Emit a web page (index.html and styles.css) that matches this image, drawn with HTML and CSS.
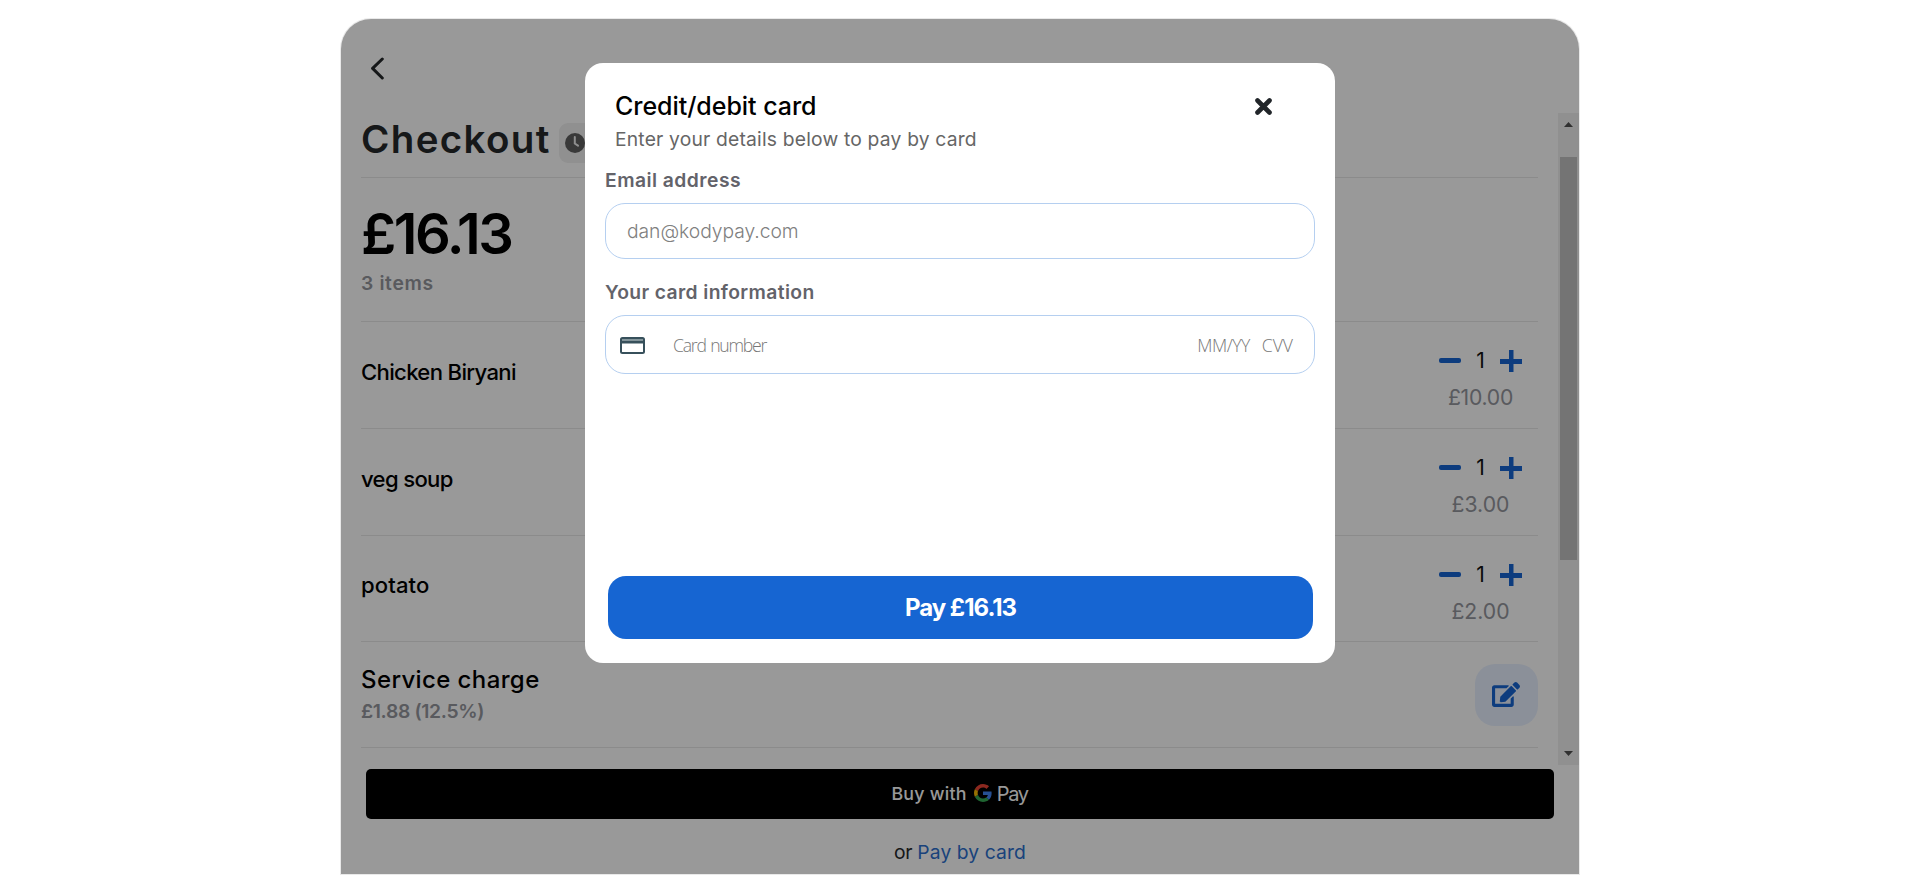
FILE: index.html
```html
<!DOCTYPE html>
<html lang="en">
<head>
<meta charset="utf-8">
<title>Checkout</title>
<link rel="stylesheet" href="styles.css">
</head>
<body>
<main class="panel">
  <header class="topbar">
    <svg class="back" width="15" height="23" viewBox="0 0 15 23"><path d="M12.3 2 2.6 11.4 12.3 21" fill="none" stroke="#25282b" stroke-width="3" stroke-linecap="round" stroke-linejoin="round"/></svg>
  </header>
  <div class="scroller">
    <div class="list">
      <div class="title-row">
        <h1 class="title">Checkout</h1>
        <div class="badge"><svg width="20" height="20" viewBox="0 0 20 20"><circle cx="10" cy="10" r="10" fill="#606060"/><path d="M9.800 4V10.500L13 12.600" fill="none" stroke="#eee" stroke-width="2" stroke-linecap="round"/></svg></div>
      </div>
      <div class="summary">
        <div class="total">£16.13</div>
        <div class="count">3 items</div>
      </div>
      <div class="item">
        <div class="name">Chicken Biryani</div>
        <div class="side">
          <div class="qty"><span class="bar"></span><span>1</span><span class="plus"></span></div>
          <div class="price long">£10.00</div>
        </div>
      </div>
      <div class="item">
        <div class="name">veg soup</div>
        <div class="side">
          <div class="qty"><span class="bar"></span><span>1</span><span class="plus"></span></div>
          <div class="price">£3.00</div>
        </div>
      </div>
      <div class="item short">
        <div class="name potato">potato</div>
        <div class="side">
          <div class="qty"><span class="bar"></span><span>1</span><span class="plus"></span></div>
          <div class="price">£2.00</div>
        </div>
      </div>
      <div class="service">
        <div>
          <div class="service-name">Service charge</div>
          <div class="service-fee">£1.88 (12.5%)</div>
        </div>
        <div class="edit"><svg width="28" height="25" viewBox="0 0 576 512"><path fill="#1665d2" d="M402.6 83.2l90.2 90.2c3.8 3.8 3.8 10 0 13.8L274.4 405.600l-92.800 10.300c-12.400 1.400-22.900-9.100-21.500-21.500l10.300-92.800L388.800 83.200c3.800-3.800 10-3.800 13.800 0zm162-22.900l-48.800-48.800c-15.200-15.200-39.900-15.200-55.200 0l-35.400 35.400c-3.800 3.800-3.800 10 0 13.800l90.200 90.200c3.800 3.800 10 3.800 13.800 0l35.400-35.400c15.200-15.300 15.200-40 0-55.200zM384 346.200V448H64V128h229.800c3.200 0 6.200-1.300 8.500-3.500l40-40c7.600-7.600 2.200-20.500-8.500-20.500H48C21.500 64 0 85.500 0 112v352c0 26.500 21.500 48 48 48h352c26.500 0 48-21.500 48-48V306.200c0-10.700-12.900-16-20.500-8.500l-40 40c-2.200 2.300-3.500 5.300-3.500 8.500z"/></svg></div>
      </div>
    </div>
    <div class="scrollbar">
      <svg class="arrow" width="9" height="5" viewBox="0 0 9 5"><path d="M0 5 4.500 0 9 5z" fill="#505050"/></svg>
      <div class="thumb"></div>
      <svg class="arrow" width="9" height="5" viewBox="0 0 9 5"><path d="M0 0 4.500 5 9 0z" fill="#505050"/></svg>
    </div>
  </div>
  <footer class="footer">
    <div class="gpay">
      <span class="buy">Buy with</span>
      <svg class="glogo" width="18" height="18" viewBox="0 0 48 48"><path fill="#EA4335" d="M24 9.500c3.540 0 6.710 1.220 9.210 3.600l6.850-6.850C35.900 2.380 30.470 0 24 0 14.620 0 6.510 5.380 2.560 13.220l7.980 6.190C12.430 13.720 17.740 9.500 24 9.500z"/><path fill="#4285F4" d="M46.980 24.550c0-1.570-.15-3.090-.38-4.550H24v9.020h12.940c-.58 2.960-2.260 5.480-4.780 7.180l7.730 6c4.510-4.180 7.090-10.360 7.090-17.650z"/><path fill="#FBBC05" d="M10.530 28.590c-.48-1.450-.76-2.990-.76-4.590s.27-3.140.76-4.590l-7.980-6.190C.92 16.460 0 20.120 0 24c0 3.880.92 7.540 2.560 10.780l7.970-6.190z"/><path fill="#34A853" d="M24 48c6.480 0 11.930-2.130 15.890-5.810l-7.730-6c-2.150 1.450-4.920 2.300-8.160 2.300-6.260 0-11.570-4.220-13.470-9.910l-7.980 6.190C6.510 42.620 14.620 48 24 48z"/></svg>
      <span class="pay">Pay</span>
    </div>
    <div class="alt"><span class="or">or</span> <a class="link">Pay by card</a></div>
  </footer>
  <div class="overlay">
    <section class="modal">
      <div class="modal-head">
        <div>
          <h2 class="modal-title">Credit/debit card</h2>
          <p class="modal-sub">Enter your details below to pay by card</p>
        </div>
        <svg class="close" width="17" height="17" viewBox="0 0 17 17"><path d="M2.500 2.500l12 12M14.500 2.500l-12 12" stroke="#212529" stroke-width="4.600" stroke-linecap="round"/></svg>
      </div>
      <div class="label email-label">Email address</div>
      <div class="field email">dan@kodypay.com</div>
      <div class="label card-label">Your card information</div>
      <div class="field card">
        <svg width="25" height="17" viewBox="0 0 25 17"><rect x="1" y="1" width="23" height="15" rx="1.500" fill="#fff" stroke="#37505b" stroke-width="2"/><path d="M2 2.700h21" stroke="#84969c" stroke-width="1.400"/><path d="M1 5h23" stroke="#37505b" stroke-width="3"/></svg>
        <span class="number">Card number</span>
        <span class="expiry">MM/YY</span>
        <span class="cvv">CVV</span>
      </div>
      <button class="submit">Pay £16.13</button>
    </section>
  </div>
</main>
</body>
</html>
```

FILE: styles.css
```css
* { box-sizing: border-box; }
body { margin: 0; height: 875px; background: #fff; font-family: Inter, "Liberation Sans", sans-serif; color: #000; overflow: hidden; }
h1, h2, p { margin: 0; }
svg { display: block; flex: none; }

.panel { position: relative; display: flex; flex-direction: column; width: 1238px; height: 855px; margin: 19px 0 0 341px; border-radius: 30px 30px 0 0; overflow: hidden; background: #fff; box-shadow: 0 0 0 1px #e9e9e9; }
.topbar { height: 94px; padding: 38px 0 0 29px; }
.scroller { display: flex; height: 652px; }
.list { width: 1177px; margin: 0 20px; }

.title-row { display: flex; height: 65px; border-bottom: 1px solid #e8e8e8; }
.title { width: 189px; margin-top: 6px; font-size: 38.5px; line-height: 40px; font-weight: 570; letter-spacing: 1.35px; color: #25282b; white-space: nowrap; }
.badge { width: 100px; height: 40px; margin: 10px 0 0 9px; padding: 10px 6px; border-radius: 9px; background: #f0f0f0; }
.summary { height: 144px; padding-top: 26px; border-bottom: 1px solid #e8e8e8; }
.total { font-size: 56px; line-height: 60px; font-weight: 600; letter-spacing: -2.44px; }
.count { margin-top: 7px; font-size: 19.3px; line-height: 24px; font-weight: 600; letter-spacing: .65px; color: #94969d; }

.item { display: flex; justify-content: space-between; height: 107px; padding-right: 16px; border-bottom: 1px solid #e8e8e8; }
.short { height: 106px; }
.name { margin-top: 36px; font-size: 22.1px; line-height: 28px; font-weight: 500; letter-spacing: -.66px; }
.potato { margin-top: 35px; letter-spacing: .1px; }
.side { width: 83px; padding-top: 26px; }
.qty { display: flex; align-items: center; justify-content: space-between; height: 25px; font-size: 21px; color: #111; }
.bar { width: 22px; height: 5px; border-radius: 2px; background: #1665d2; }
.plus { width: 22px; height: 22px; background: linear-gradient(#1665d2, #1665d2) 0 9px / 22px 5px no-repeat, linear-gradient(#1665d2, #1665d2) 9px 0 / 4.500px 22px no-repeat; }
.price { margin-top: 11px; font-size: 21.2px; line-height: 26px; text-align: center; color: #94969d; }
.long { letter-spacing: -.26px; }

.service { display: flex; justify-content: space-between; height: 106px; padding-top: 22px; border-bottom: 1px solid #e8e8e8; }
.service-name { margin-top: 1px; font-size: 24px; line-height: 30px; font-weight: 500; letter-spacing: .39px; }
.service-fee { margin-top: 4px; font-size: 19.3px; line-height: 24px; font-weight: 600; letter-spacing: -.34px; color: #94969d; }
.edit { width: 63px; height: 62px; padding: 18px 0 0 17px; border-radius: 20px; background: #e8f1ff; }

.scrollbar { display: flex; flex-direction: column; align-items: center; width: 21px; padding: 9px 0; background: #f1f1f1; }
.thumb { width: 17px; height: 403px; margin: 30px 0 auto; background: #c1c1c1; }

.footer { padding: 4px 25px 0; }
.gpay { display: flex; justify-content: center; align-items: center; height: 50px; border-radius: 5px; background: #000; color: #fff; line-height: 24px; }
.buy { font-size: 17.8px; font-weight: 450; letter-spacing: .25px; }
.glogo { margin: 0 5px 2px 7px; }
.pay { padding-right: 1px; font-size: 20px; letter-spacing: -1.400px; }
.alt { margin-top: 21px; text-align: center; font-size: 19.3px; line-height: 24px; }
.or { color: #25282b; letter-spacing: -.5px; }
.link { color: #2c6fce; letter-spacing: .09px; }

.overlay { position: absolute; inset: 0; padding-top: 44px; background: rgba(0, 0, 0, .4); }
.modal { width: 750px; height: 600px; margin: 0 auto; padding: 27px 20px 0; border-radius: 18px; background: #fff; }
.modal-head { display: flex; justify-content: space-between; padding: 0 43px 0 10px; }
.modal-title { font-size: 25px; line-height: 32px; font-weight: 500; letter-spacing: -.05px; }
.modal-sub { margin-top: 5px; font-size: 19.3px; line-height: 24px; letter-spacing: .18px; color: #666; }
.close { margin-top: 8px; }
.label { font-size: 19.3px; line-height: 24px; font-weight: 600; color: #63636a; }
.email-label { margin-top: 17px; letter-spacing: .46px; }
.card-label { margin-top: 21px; letter-spacing: .37px; }
.field { display: flex; align-items: center; margin-top: 11px; border: 1px solid #b5cff0; border-radius: 20px; }
.email { height: 56px; padding-left: 21px; font-size: 19.3px; font-weight: 300; letter-spacing: -.05px; color: #808080; }
.card { height: 59px; padding: 1px 21px 0 14px; font: 300 17.6px "Open Sans", sans-serif; color: #777; }
.number { margin-left: 28px; letter-spacing: -1.200px; word-spacing: 1px; }
.expiry { margin-left: auto; letter-spacing: -.5px; }
.cvv { margin-left: 12px; }
.submit { display: block; width: 705px; height: 63px; margin: 202px 0 0 3px; border: 0; border-radius: 18px; background: #1665d2; color: #fff; font: 700 24px Inter, sans-serif; letter-spacing: -.99px; }
```
